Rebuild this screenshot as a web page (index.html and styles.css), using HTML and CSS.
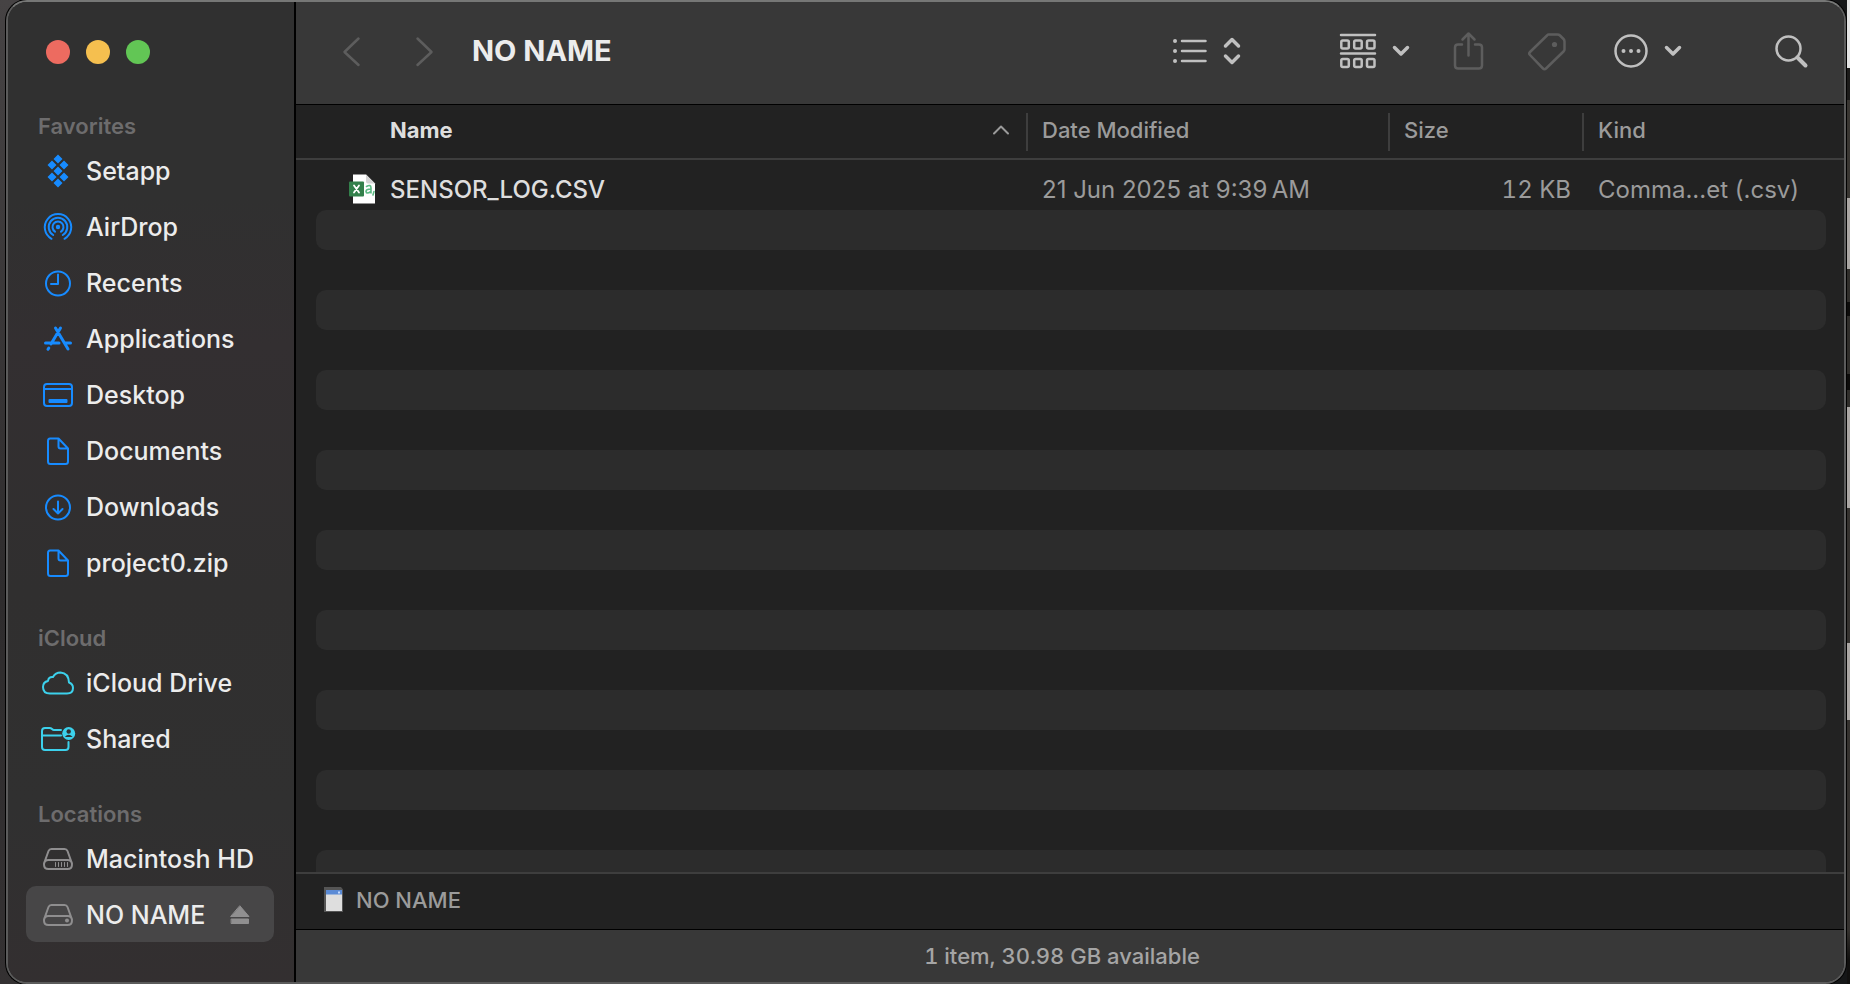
FILE: index.html
```html
<!DOCTYPE html>
<html lang="en">
<head>
<meta charset="utf-8">
<title>NO NAME</title>
<link rel="stylesheet" href="styles.css">
</head>
<body>
<svg class="defs" aria-hidden="true">
  <symbol id="doc" viewBox="0 0 36 36"><path d="M10 5.500H18.500L28 15.500V28.500Q28 31 25.500 31H10.500Q8 31 8 28.500V8Q8 5.500 10 5.500ZM18.500 5.500V13.500Q18.500 15.500 20.500 15.500H28"/></symbol>
  <symbol id="drive" viewBox="0 0 36 36"><path d="M4 22.500 8.500 10Q9.300 8 11.500 8H24.500Q26.700 8 27.500 10L32 22.500M8.500 19H27.500Q32 19 32 23.500Q32 28 27.500 28H8.500Q4 28 4 23.500Q4 19 8.500 19Z"/></symbol>
  <symbol id="chev" viewBox="0 0 18 12"><path d="M2.500 2.500 9 9 15.500 2.500"/></symbol>
</svg>
<div class="window">
  <nav class="sidebar" aria-label="Sidebar">
    <div class="lights">
      <button class="light close" aria-label="Close"></button>
      <button class="light minimize" aria-label="Minimize"></button>
      <button class="light expand" aria-label="Zoom"></button>
    </div>
    <h2 class="group">Favorites</h2>
    <a class="item" href="#"><svg class="icon fill" viewBox="0 0 36 36"><path d="M18 1.500 22.500 6 18 10.500 13.500 6ZM12 7.500 16.500 12 12 16.500 7.500 12ZM24 7.500 28.500 12 24 16.500 19.500 12ZM18 13.500 22.500 18 18 22.500 13.500 18ZM12 19.500 16.500 24 12 28.500 7.500 24ZM24 19.500 28.500 24 24 28.500 19.500 24ZM18 25.500 22.500 30 18 34.500 13.500 30Z"/></svg>Setapp</a>
    <a class="item" href="#"><svg class="icon" viewBox="0 0 36 36"><path d="M11.500 29.800A13.200 13.200 0 1 1 24.500 29.800M13.200 26A9.300 9.300 0 1 1 22.800 26M15 22.600A5.500 5.500 0 1 1 21 22.600"/><circle class="solid" cx="18" cy="18" r="2.200"/></svg>AirDrop</a>
    <a class="item" href="#"><svg class="icon" viewBox="0 0 36 36"><circle cx="18" cy="18.500" r="12"/><path d="M18 9.500V19H11"/></svg>Recents</a>
    <a class="item" href="#"><svg class="icon apps" viewBox="0 0 36 36"><path d="M15.500 7 28 28M20.500 7 11 23M5.500 22H19M25.500 22H30.500M8.800 27 8 28.300"/></svg>Applications</a>
    <a class="item" href="#"><svg class="icon" viewBox="0 0 36 36"><rect x="4" y="7" width="28" height="22" rx="3"/><path d="M4 12H32"/><rect class="solid" x="8.500" y="22" width="19" height="4" rx="1"/></svg>Desktop</a>
    <a class="item" href="#"><svg class="icon"><use href="#doc"/></svg>Documents</a>
    <a class="item" href="#"><svg class="icon" viewBox="0 0 36 36"><circle cx="18" cy="18.500" r="12"/><path d="M18 12.500V24.500M13.500 20 18 24.500 22.500 20"/></svg>Downloads</a>
    <a class="item" href="#"><svg class="icon"><use href="#doc"/></svg>project0.zip</a>
    <h2 class="group">iCloud</h2>
    <a class="item cloud" href="#"><svg class="icon" viewBox="0 0 36 36"><path d="M10 28.500Q3 28.500 3 22Q3 17 8 16Q8.500 11.500 13 12Q15.500 7.500 20.500 7.500Q28.500 8 29 17.500Q33 19 33 23Q33 28.500 27 28.500Z"/></svg>iCloud Drive</a>
    <a class="item cloud" href="#"><svg class="icon" viewBox="0 0 36 36"><path d="M21 9H14Q13 9 12 8Q11 7 9.500 7H5Q2 7 2 10V26Q2 29 5 29H25.500Q28.500 29 28.500 26V21M2 14.500H21"/><circle class="solid" cx="28.700" cy="12.500" r="6.500"/><circle class="cut" cx="28.700" cy="10.500" r="2.200"/><path class="cut" d="M24.800 15.900Q28.700 11.500 32.600 15.900Z"/></svg>Shared</a>
    <h2 class="group">Locations</h2>
    <a class="item disk" href="#"><svg class="icon"><use href="#drive"/><path class="slots" d="M15.500 21.500V25.500M18.500 21.500V25.500M21.500 21.500V25.500M24.500 21.500V25.500M27.500 21.500V25.500"/></svg>Macintosh HD</a>
    <a class="item disk selected" href="#" aria-current="page"><svg class="icon"><use href="#drive"/><circle class="solid" cx="27" cy="23.500" r="2"/></svg>NO NAME
      <svg class="eject" viewBox="0 0 20 20"><path d="M10 1 19 11.500H1ZM1.500 14H18.500V18.500H1.500Z"/></svg></a>
    <h2 class="group">Tags</h2>
  </nav>
  <main class="main">
    <header class="toolbar">
      <button class="tool dim" aria-label="Back"><svg width="20" height="32" viewBox="0 0 20 32"><path d="M16.500 3.500 2.500 17 16.500 30"/></svg></button>
      <button class="tool dim forward" aria-label="Forward"><svg width="20" height="32" viewBox="0 0 20 32"><path d="M3.500 3.500 17.500 17 3.500 30"/></svg></button>
      <h1 class="title">NO NAME</h1>
      <button class="tool view" aria-label="View as list">
        <svg width="36" height="28" viewBox="0 0 36 28"><path d="M10 4H33.500M10 14H33.500M10 24H33.500"/><path class="dots" d="M3 4H3.010M3 14H3.010M3 24H3.010"/></svg>
        <svg class="bold" width="18" height="28" viewBox="0 0 18 28"><path d="M2.500 9 9 2.500 15.500 9M2.500 19 9 25.500 15.500 19"/></svg>
      </button>
      <button class="tool arrange" aria-label="Group by">
        <svg width="38" height="38" viewBox="0 0 38 38"><path class="rules" d="M2 3H36M2 21.500H36"/><g class="boxes"><rect x="2.300" y="8.500" width="7.500" height="8" rx="1.500"/><rect x="15.200" y="8.500" width="7.500" height="8" rx="1.500"/><rect x="28" y="8.500" width="7.500" height="8" rx="1.500"/><rect x="2.300" y="27" width="7.500" height="8" rx="1.500"/><rect x="15.200" y="27" width="7.500" height="8" rx="1.500"/><rect x="28" y="27" width="7.500" height="8" rx="1.500"/></g></svg>
        <svg class="bold" width="18" height="12"><use href="#chev"/></svg>
      </button>
      <button class="tool dim share" aria-label="Share"><svg width="32" height="40" viewBox="0 0 32 40"><path d="M10 13.500H6Q3 13.500 3 16.500V34.500Q3 37.500 6 37.500H27Q30 37.500 30 34.500V16.500Q30 13.500 27 13.500H23M16.500 24.500V3M10.500 8.500 16.500 2.500 22.500 8.500"/></svg></button>
      <button class="tool dim tag" aria-label="Tags"><svg width="40" height="40" viewBox="0 0 40 40"><path d="M21.500 3.500H30.500Q32 3.500 33 4.500L36.500 8Q37.500 9 37.500 10.500V18.500Q37.500 19.500 36.500 20.500L19 37.500Q17.500 39 16 37.500L3 24Q1.500 22.500 3 21L20 4.500Q21 3.500 21.500 3.500Z"/><circle class="solid" cx="27.500" cy="13.500" r="2.600"/></svg></button>
      <button class="tool more" aria-label="Actions">
        <svg width="36" height="36" viewBox="0 0 36 36"><circle cx="18" cy="18" r="15.500"/><path class="dots" d="M10.500 18H10.510M18 18H18.010M25.500 18H25.510"/></svg>
        <svg class="bold" width="18" height="12"><use href="#chev"/></svg>
      </button>
      <button class="tool" aria-label="Search"><svg width="36" height="36" viewBox="0 0 36 36"><circle cx="15.500" cy="15.500" r="12"/><path class="handle" d="M24.500 24.500 32.500 32.500"/></svg></button>
    </header>
    <div class="listing">
      <table class="files">
        <colgroup><col class="gutter"><col><col class="c-date"><col class="c-size"><col class="c-kind"><col class="gutter-end"></colgroup>
        <thead>
          <tr><th></th>
            <th class="name"><button class="sort">Name <svg width="18" height="12" viewBox="0 0 18 12"><path d="M2 9.500 9 2.500 16 9.500"/></svg></button></th>
            <th><button class="sort">Date Modified</button></th>
            <th><button class="sort">Size</button></th>
            <th><button class="sort">Kind</button></th><th></th></tr>
        </thead>
        <tbody>
          <tr class="file"><td></td>
            <td class="name"><div class="filename"><svg width="30" height="32" viewBox="0 0 30 32"><path fill="#fff" d="M5 1.500H18L27 10.500V30.500H5Z"/><path fill="#d4d4d4" d="M18 1.500 27 10.500H20Q18 10.500 18 8.500Z"/><rect x="1" y="8.500" width="15" height="15" rx="1" fill="#33804b"/><path d="M6 12.500 11 19.500M11 12.500 6 19.500" stroke="#fff" stroke-width="1.800"/><path d="M18.500 13.500Q23 11 23 15V20M23 16Q18 16 18 18.500Q18.500 21.500 23 18.500M26 18.500 25 22" fill="none" stroke="#5cba85" stroke-width="1.600"/></svg>SENSOR_LOG.CSV</div></td>
            <td>21 Jun 2025 at 9:39&#8239;AM</td>
            <td class="size">12 KB</td>
            <td>Comma...et (.csv)</td><td></td></tr>
          <tr class="stripe"><td></td><td colspan="4"></td><td></td></tr><tr><td colspan="6"></td></tr>
          <tr class="stripe"><td></td><td colspan="4"></td><td></td></tr><tr><td colspan="6"></td></tr>
          <tr class="stripe"><td></td><td colspan="4"></td><td></td></tr><tr><td colspan="6"></td></tr>
          <tr class="stripe"><td></td><td colspan="4"></td><td></td></tr><tr><td colspan="6"></td></tr>
          <tr class="stripe"><td></td><td colspan="4"></td><td></td></tr><tr><td colspan="6"></td></tr>
          <tr class="stripe"><td></td><td colspan="4"></td><td></td></tr><tr><td colspan="6"></td></tr>
          <tr class="stripe"><td></td><td colspan="4"></td><td></td></tr><tr><td colspan="6"></td></tr>
          <tr class="stripe"><td></td><td colspan="4"></td><td></td></tr><tr><td colspan="6"></td></tr>
          <tr class="stripe"><td></td><td colspan="4"></td><td></td></tr>
        </tbody>
      </table>
    </div>
    <div class="pathbar">
      <svg width="22" height="28" viewBox="0 0 22 28"><path fill="#555" d="M1 1H18L20 3.500V26H1Z"/><rect x="3" y="4" width="16" height="21" fill="#dedede"/><rect x="3" y="4" width="16" height="4.500" fill="#5b8bd6"/><rect x="15" y="5.500" width="2" height="2" fill="#c6dcff"/></svg>
      NO NAME
    </div>
    <footer class="status">1 item, 30.98 GB available</footer>
  </main>
</div>
</body>
</html>
```
FILE: styles.css
```css
* { box-sizing: border-box; }

body {
  margin: 0;
  height: 100vh;
  overflow: hidden;
  padding: 0 4px 0 6px;
  font-family: Inter, "Liberation Sans", sans-serif;
  color: #ececec;
  background:
    linear-gradient(#e4e4e4 68px, #1c1b1a 68px 100px, #393632 100px 198px, #aaa6a3 198px 269px,
      #302e2b 269px 302px, #0d0c0b 302px 316px, #302e2b 316px 374px, #0d0c0b 374px 390px,
      #302e2b 390px 407px, #aaa6a3 407px 508px, #35322f 508px 643px, #aaa6a3 643px 720px,
      #35322f 720px 930px, #11100f 960px) right / 3px 100% no-repeat,
    linear-gradient(90deg, transparent 50%, #151617 50%),
    linear-gradient(#464344, #2e2c2d 60%, #343132);
}

button {
  border: 0;
  padding: 0;
  background: none;
  color: inherit;
  font: inherit;
}

svg {
  flex: none;
  fill: none;
  stroke: currentColor;
  stroke-width: 2;
  stroke-linecap: round;
  stroke-linejoin: round;
}

.defs { position: absolute; width: 0; height: 0; }
.solid { fill: currentColor; stroke: none; }

.window {
  display: flex;
  height: 100%;
  overflow: hidden;
  border: 2px solid #5b5b5b;
  border-top-color: #767776;
  border-radius: 21px;
  background: #222;
  box-shadow: 0 0 0 1px #000;
}

/* Sidebar */
.sidebar {
  flex: none;
  width: 288px;
  padding: 0 20px 0 18px;
  overflow: hidden;
  border-right: 2px solid #000;
  background: linear-gradient(#303030 20%, #332f31 35%, #302f2f 60%, #303030 82%, #332f30);
}

.lights { display: flex; gap: 16px; padding: 38px 20px 0; height: 76px; }
.light { width: 24px; height: 24px; border-radius: 50%; }
.close { background: #ed6b60; }
.minimize { background: #f5bf4f; }
.expand { background: #62c655; }

.group {
  margin: 30px 0 0;
  padding: 2px 0 0 12px;
  font-size: 22px;
  font-weight: 600;
  line-height: 32px;
  color: #6d6c6d;
}

.item {
  display: flex;
  align-items: center;
  gap: 10px;
  height: 56px;
  padding: 2px 14px 0;
  border-radius: 10px;
  font-size: 25px;
  font-weight: 500;
  color: inherit;
  text-decoration: none;
  white-space: nowrap;
}

.icon { width: 36px; height: 36px; color: #178bff; }
.fill { fill: currentColor; stroke: none; }
.apps { stroke-width: 3; }
.cloud .icon { color: #3cd1ec; }
.disk .icon { color: #8f8e8f; }
.slots { stroke-width: 1; }
.cut { fill: #303030; stroke: none; }
.selected { background: #474647; }
.eject { width: 20px; height: 20px; margin: 0 10px 0 auto; color: #908f90; fill: currentColor; stroke-width: 1; }

/* Toolbar */
.main { flex: 1; min-width: 0; display: flex; flex-direction: column; }

.toolbar {
  flex: none;
  display: flex;
  align-items: center;
  height: 103px;
  padding: 0 35px 4px 46px;
  border-bottom: 1px solid #000;
  background: #383838;
  color: #c0c0c0;
}

.tool { display: flex; align-items: center; gap: 15px; }
.tool svg { stroke-width: 2.5; }
.tool.dim { color: #5d5d5d; }
.tool .bold { stroke-width: 3.5; }
.tool .dots { stroke-width: 4; }
.tool .handle { stroke-width: 4; }
.forward { margin-left: 52px; }
.title { flex: 1; margin: 0 0 0 38px; font-size: 29px; line-height: 40px; font-weight: 700; color: #ececec; }
.view { margin-right: 98px; }
.arrange { margin-right: 42px; }
.share { margin-right: 43px; }
.tag { margin-right: 46px; }
.more { margin-right: 91px; }

/* File list */
.listing { flex: 1; min-height: 0; overflow: hidden; }
.files { width: 100%; table-layout: fixed; border-spacing: 0; font-size: 24px; color: #9b9b9b; }
.gutter { width: 20px; }
.gutter-end { width: 18px; }
.c-date { width: 362px; }
.c-size { width: 194px; }
.c-kind { width: 244px; }
.files th { height: 55px; padding: 0; border-bottom: 2px solid #3e3e3e; }
.files td { height: 40px; padding: 0 0 0 16px; white-space: nowrap; }

.sort {
  display: flex;
  align-items: center;
  justify-content: space-between;
  width: 100%;
  height: 38px;
  padding: 0 16px 4px 14px;
  border-left: 2px solid #3e3e3e;
  font-size: 22px;
  font-weight: 500;
}

.name .sort { padding-left: 74px; border-left: 0; font-weight: 700; color: #dedede; }
.name .sort svg { color: #9b9b9b; }
.files .file td { height: 50px; padding-top: 8px; }
.files td.name { padding-left: 32px; font-weight: 500; color: #dedede; }
.filename { display: flex; align-items: center; gap: 12px; }
.filename svg { stroke: none; }
.files td.size { padding-right: 11px; text-align: right; font-variant-numeric: tabular-nums; }
.stripe td[colspan] { border-radius: 10px; background: #2c2c2c; }

/* Bars under the list */
.pathbar {
  flex: none;
  display: flex;
  align-items: center;
  gap: 11px;
  height: 57px;
  padding: 0 27px 4px;
  border-top: 2px solid #3e3e3e;
  font-size: 22px;
  font-weight: 500;
  color: #9b9b9b;
}

.pathbar svg { stroke: none; }

.status {
  flex: none;
  height: 53px;
  padding-right: 16px;
  border-top: 1px solid #000;
  background: #383838;
  font-size: 22px;
  font-weight: 500;
  font-variant-numeric: tabular-nums;
  line-height: 52px;
  text-align: center;
  color: #a5a5a5;
}
```
